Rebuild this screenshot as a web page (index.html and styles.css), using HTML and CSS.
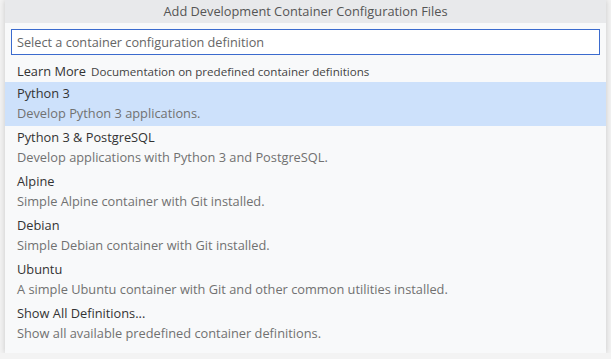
FILE: index.html
```html
<!DOCTYPE html>
<html>
<head>
<meta charset="utf-8">
<link rel="stylesheet" href="styles.css">
</head>
<body>
<div class="widget">
  <div class="title">Add Development Container Configuration Files</div>
  <div class="input-wrap">
    <div class="input">Select a container configuration definition</div>
  </div>
  <div class="list">
    <div class="row single"><span class="label">Learn More</span><span class="detail">Documentation on predefined container definitions</span></div>
    <div class="row selected"><div class="label">Python 3</div><div class="desc">Develop Python 3 applications.</div></div>
    <div class="row"><div class="label">Python 3 &amp; PostgreSQL</div><div class="desc">Develop applications with Python 3 and PostgreSQL.</div></div>
    <div class="row"><div class="label">Alpine</div><div class="desc">Simple Alpine container with Git installed.</div></div>
    <div class="row"><div class="label">Debian</div><div class="desc">Simple Debian container with Git installed.</div></div>
    <div class="row"><div class="label">Ubuntu</div><div class="desc">A simple Ubuntu container with Git and other common utilities installed.</div></div>
    <div class="row"><div class="label">Show All Definitions...</div><div class="desc">Show all available predefined container definitions.</div></div>
  </div>
</div>
</body>
</html>
```
FILE: styles.css
```css
html, body {
  margin: 0;
  padding: 0;
  background: #f3f3f3;
  font-family: "Open Sans", "Noto Sans", sans-serif;
  font-size: 12px;
}
.widget {
  margin-left: 5px;
  width: 601px;
  height: 353px;
  background: #f8f9fa;
  box-shadow: 0 0 6px rgba(0, 0, 0, 0.18);
  display: flex;
  flex-direction: column;
}
.title {
  height: 23px;
  line-height: 22px;
  background: #e8e9eb;
  color: #555;
  text-align: center;
  font-size: 12.8px;
}
.input-wrap {
  padding: 6px 6px 0 6px;
}
.input {
  height: 24px;
  border: 1px solid #3b6bce;
  background: #fff;
  line-height: 24px;
  padding-left: 5px;
  color: #666;
  font-size: 12.7px;
}
.list {
  margin-top: 1px;
  display: flex;
  flex-direction: column;
}
.row {
  padding-left: 12px;
  display: flex;
  flex-direction: column;
  height: 44px;
}
.row.single {
  flex-direction: row;
  align-items: baseline;
  gap: 5px;
  height: 22px;
  padding-top: 4px;
  line-height: 22px;
}
.row.selected {
  background: #cde1fb;
}
.label {
  height: 22px;
  line-height: 22px;
  color: #333;
  font-size: 12.8px;
}
.detail {
  color: #444;
  font-size: 11.6px;
}
.desc {
  height: 22px;
  line-height: 18px;
  color: #717171;
  font-size: 12.8px;
}
```
